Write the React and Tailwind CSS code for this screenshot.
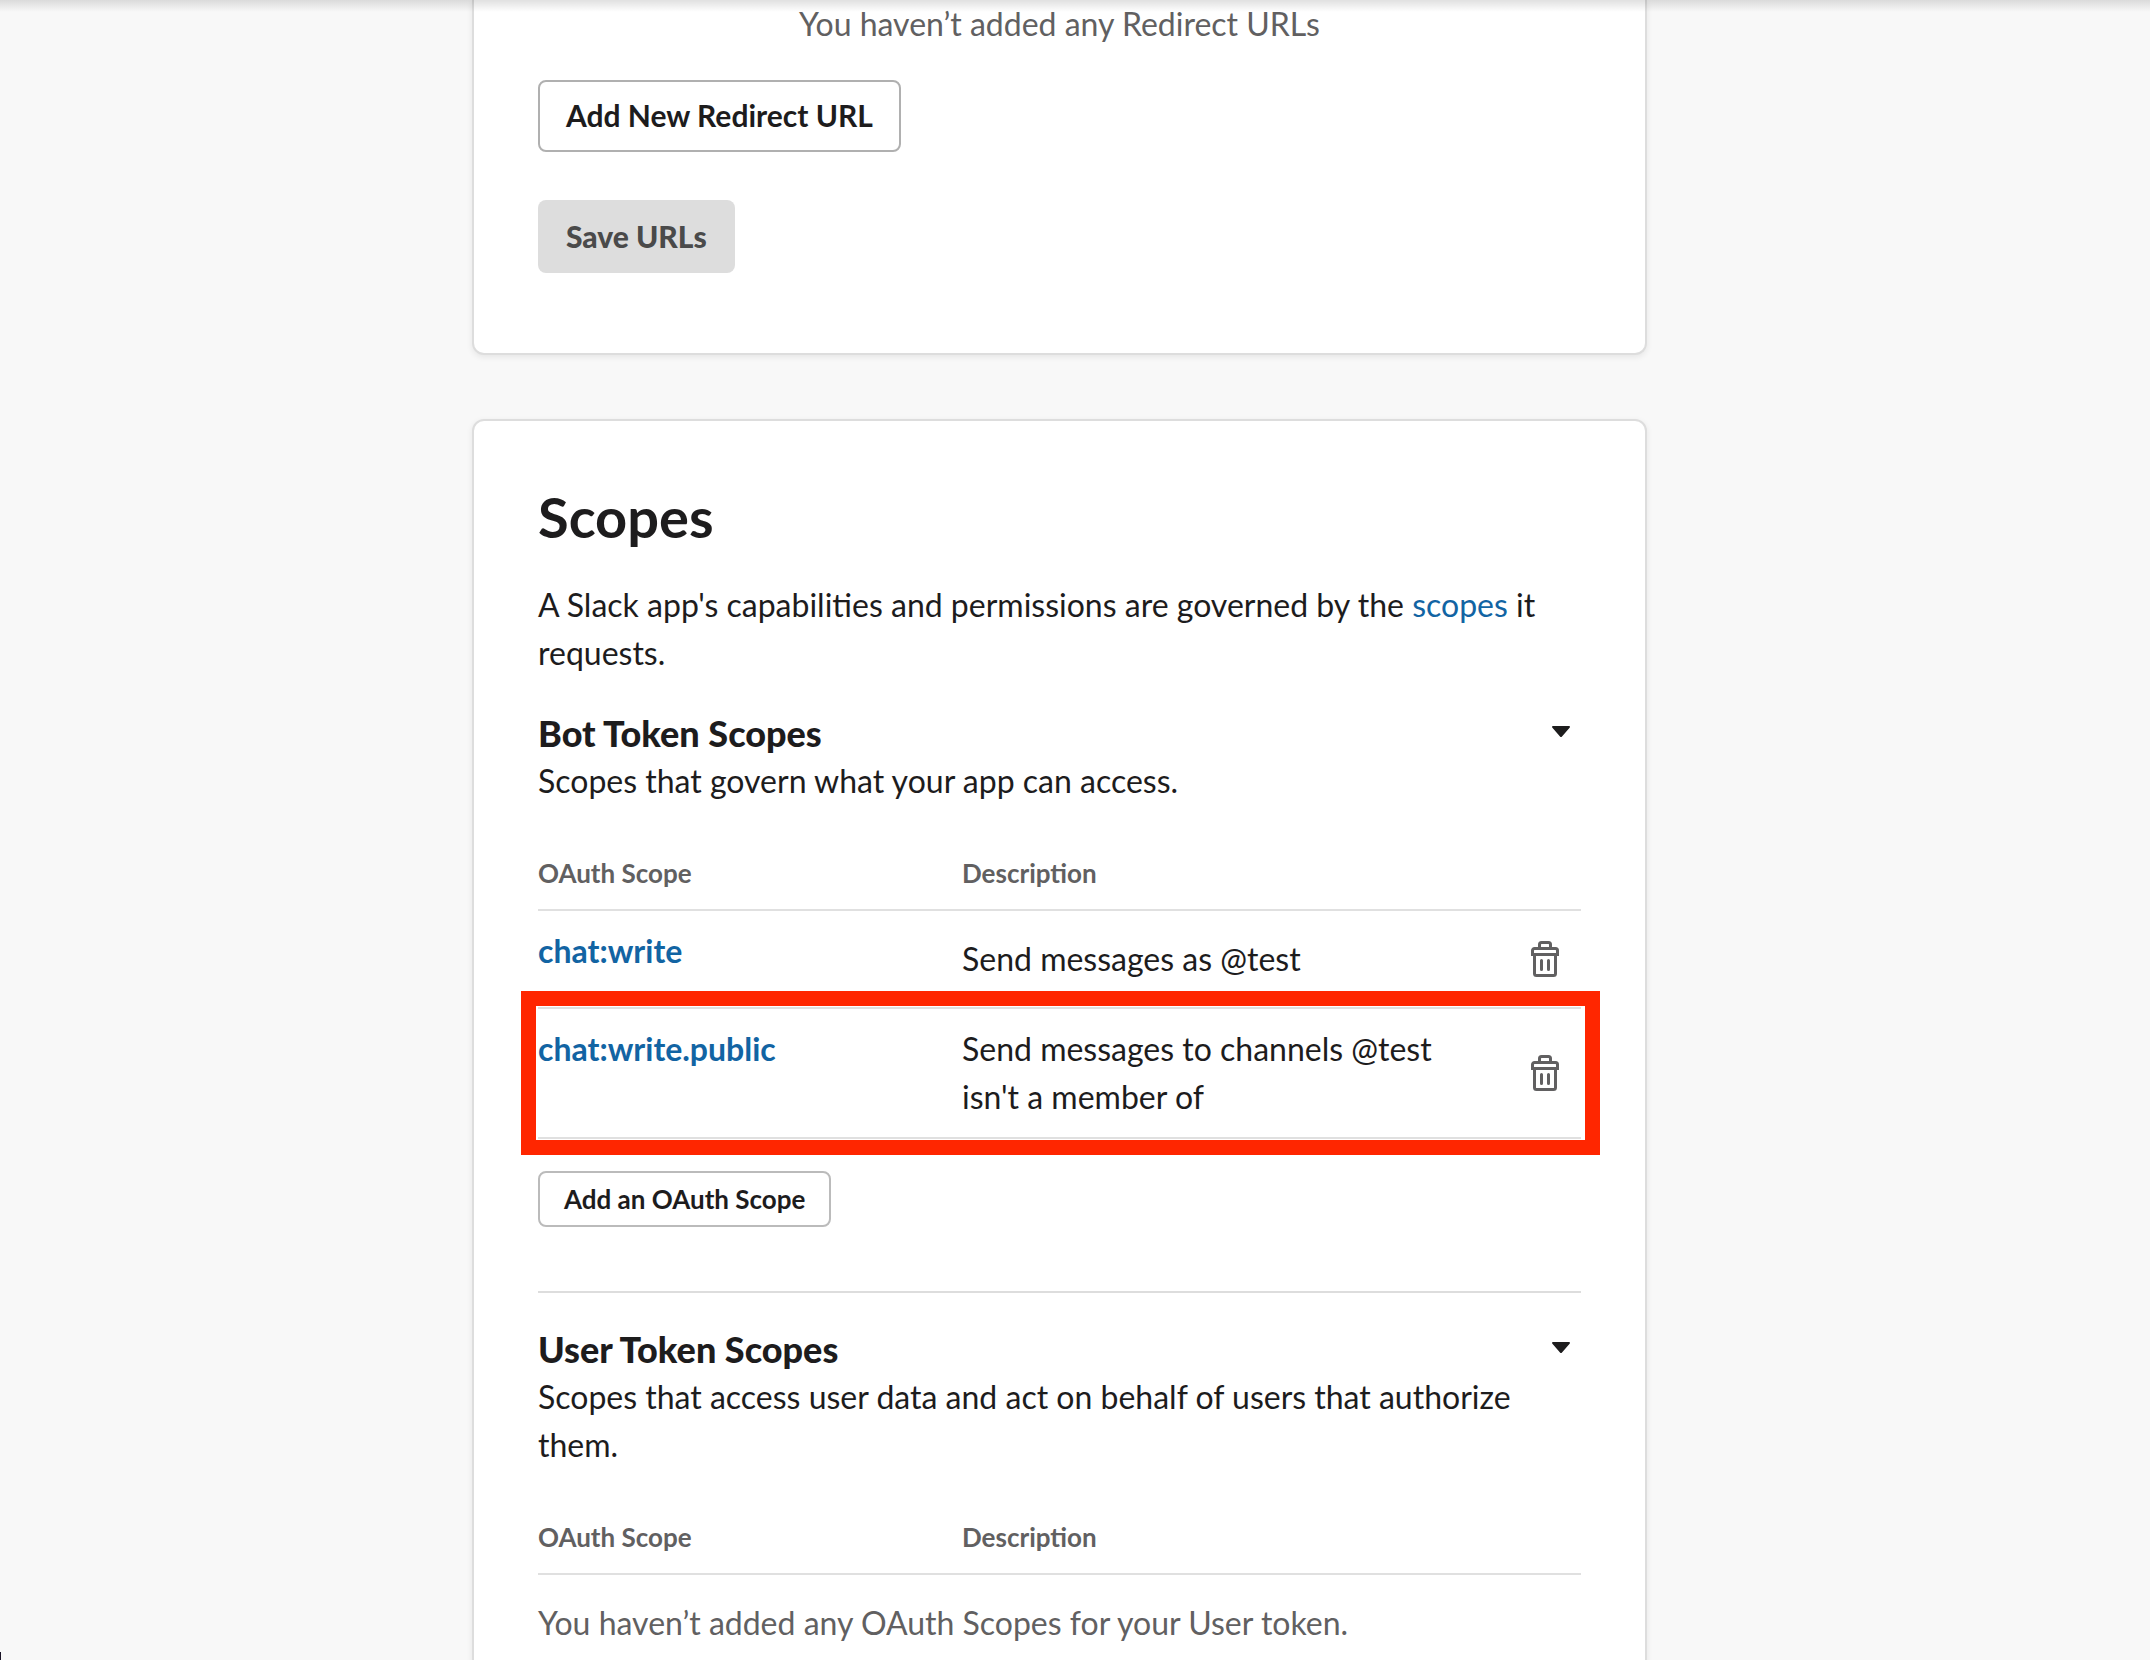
const botScopes = [
  { name: 'chat:write', description: 'Send messages as @test' },
  {
    name: 'chat:write.public',
    description: "Send messages to channels @test isn't a member of",
    highlighted: true,
  },
];

const TrashIcon = () => (
  <svg width="28" height="36" viewBox="0 0 28 36" fill="none" stroke="currentColor" strokeWidth="3" aria-hidden="true">
    <path d="M8.5 7V3.5a2 2 0 0 1 2-2h7a2 2 0 0 1 2 2V7" />
    <path d="M1.5 13.5v-4a2 2 0 0 1 2-2h21a2 2 0 0 1 2 2v4z" />
    <path d="M3.5 14v18.5a2 2 0 0 0 2 2h17a2 2 0 0 0 2-2V14" />
    <path d="M10.5 19.5v9M17.5 19.5v9" strokeLinecap="round" />
  </svg>
);

const CaretIcon = () => (
  <svg width="18" height="11" viewBox="0 0 18 11" fill="currentColor" aria-hidden="true">
    <path d="M1 0h16c1 0 1.3 1 .6 1.7l-7.6 8.7c-.6.7-1.4.7-2 0L.4 1.7C-.3 1 0 0 1 0z" />
  </svg>
);

const ScopeTable = ({ scopes }) => (
  <table className="mt-12 w-full table-fixed border-separate border-spacing-0 text-left">
    <thead>
      <tr className="text-[26px] leading-10 text-[#616061]">
        <th className="w-[424px] border-b-2 border-[#e0e0e0] p-0 pb-4 font-bold">OAuth Scope</th>
        <th className="border-b-2 border-[#e0e0e0] p-0 pb-4 font-bold">Description</th>
        <th className="w-[68px] border-b-2 border-[#e0e0e0] p-0" aria-label="Actions" />
      </tr>
    </thead>
    <tbody>
      {scopes.length === 0 && (
        <tr>
          <td colSpan={3} className="p-0 pt-6 text-[#616061]">
            You haven’t added any OAuth Scopes for your User token.
          </td>
        </tr>
      )}
      {scopes.map((scope) => (
        <tr key={scope.name} className="relative">
          <td className="border-b-2 border-[#e0e0e0] p-0 py-4 align-top">
            <a href="#scope" className="font-bold text-[#1264a3]">
              {scope.name}
            </a>
            {scope.highlighted && (
              <div className="pointer-events-none absolute -top-[18px] -right-[19px] -bottom-4 -left-[17px] border-[15px] border-[#ff2600]" />
            )}
          </td>
          <td className="border-b-2 border-[#e0e0e0] p-0 py-4 pr-12 align-middle">{scope.description}</td>
          <td className="border-b-2 border-[#e0e0e0] p-0 py-4 align-middle">
            <button
              type="button"
              aria-label={`Remove ${scope.name}`}
              className="flex size-16 items-center justify-center text-[#616061]"
            >
              <TrashIcon />
            </button>
          </td>
        </tr>
      ))}
    </tbody>
  </table>
);

const ScopeHeading = ({ title, children }) => (
  <>
    <div className="flex items-center justify-between">
      <h3 className="text-[36px] leading-[48px] font-black">{title}</h3>
      <button type="button" aria-label={`Toggle ${title}`} className="px-[11px] pt-3 pb-4">
        <CaretIcon />
      </button>
    </div>
    <p>{children}</p>
  </>
);

export default function App() {
  return (
    <div className="relative h-screen overflow-hidden bg-[#f8f8f8] font-['Lato',sans-serif] text-[32px] leading-[48px] text-[#1d1c1d]">
      <div className="absolute inset-x-0 top-0 h-3 bg-linear-to-b from-black/12 to-transparent" />
      <div className="absolute bottom-0 left-0 h-2 w-px bg-[#1a1325]" />

      <main className="mx-auto flex max-w-[1206px] flex-col gap-16 pr-[31px]">
        <section className="rounded-b-xl border-2 border-t-0 border-[#ddd] bg-white px-16 pb-20 shadow-[0_2px_6px_rgba(0,0,0,0.08)]">
          <p className="text-center text-[#616061]">You haven’t added any Redirect URLs</p>
          <div className="mt-8 flex flex-col items-start gap-12">
            <button
              type="button"
              className="h-[72px] rounded-lg border-2 border-[#b0b0b0] bg-white px-[26px] pb-0.5 text-[30px] font-bold"
            >
              Add New Redirect URL
            </button>
            <button
              type="button"
              disabled
              className="h-[73px] rounded-lg bg-[#ddd] px-7 pb-0.5 text-[30px] font-black text-[#4a4a4a]"
            >
              Save URLs
            </button>
          </div>
        </section>

        <section className="rounded-xl border-2 border-[#ddd] bg-white p-16 shadow-[0_2px_6px_rgba(0,0,0,0.08)]">
          <h2 className="text-[56px] leading-[64px] font-bold">Scopes</h2>
          <p className="mt-8">
            A Slack app's capabilities and permissions are governed by the{' '}
            <a href="#scopes" className="text-[#1264a3]">
              scopes
            </a>{' '}
            it requests.
          </p>

          <div className="mt-8 border-b-2 border-[#ddd] pb-16">
            <ScopeHeading title="Bot Token Scopes">Scopes that govern what your app can access.</ScopeHeading>
            <ScopeTable scopes={botScopes} />
            <button
              type="button"
              className="mt-8 block h-14 rounded-lg border-2 border-[#bbb] bg-white px-6 text-[26px] font-bold"
            >
              Add an OAuth Scope
            </button>
          </div>

          <div className="mt-8">
            <ScopeHeading title="User Token Scopes">
              Scopes that access user data and act on behalf of users that authorize them.
            </ScopeHeading>
            <ScopeTable scopes={[]} />
          </div>
        </section>
      </main>
    </div>
  );
}
